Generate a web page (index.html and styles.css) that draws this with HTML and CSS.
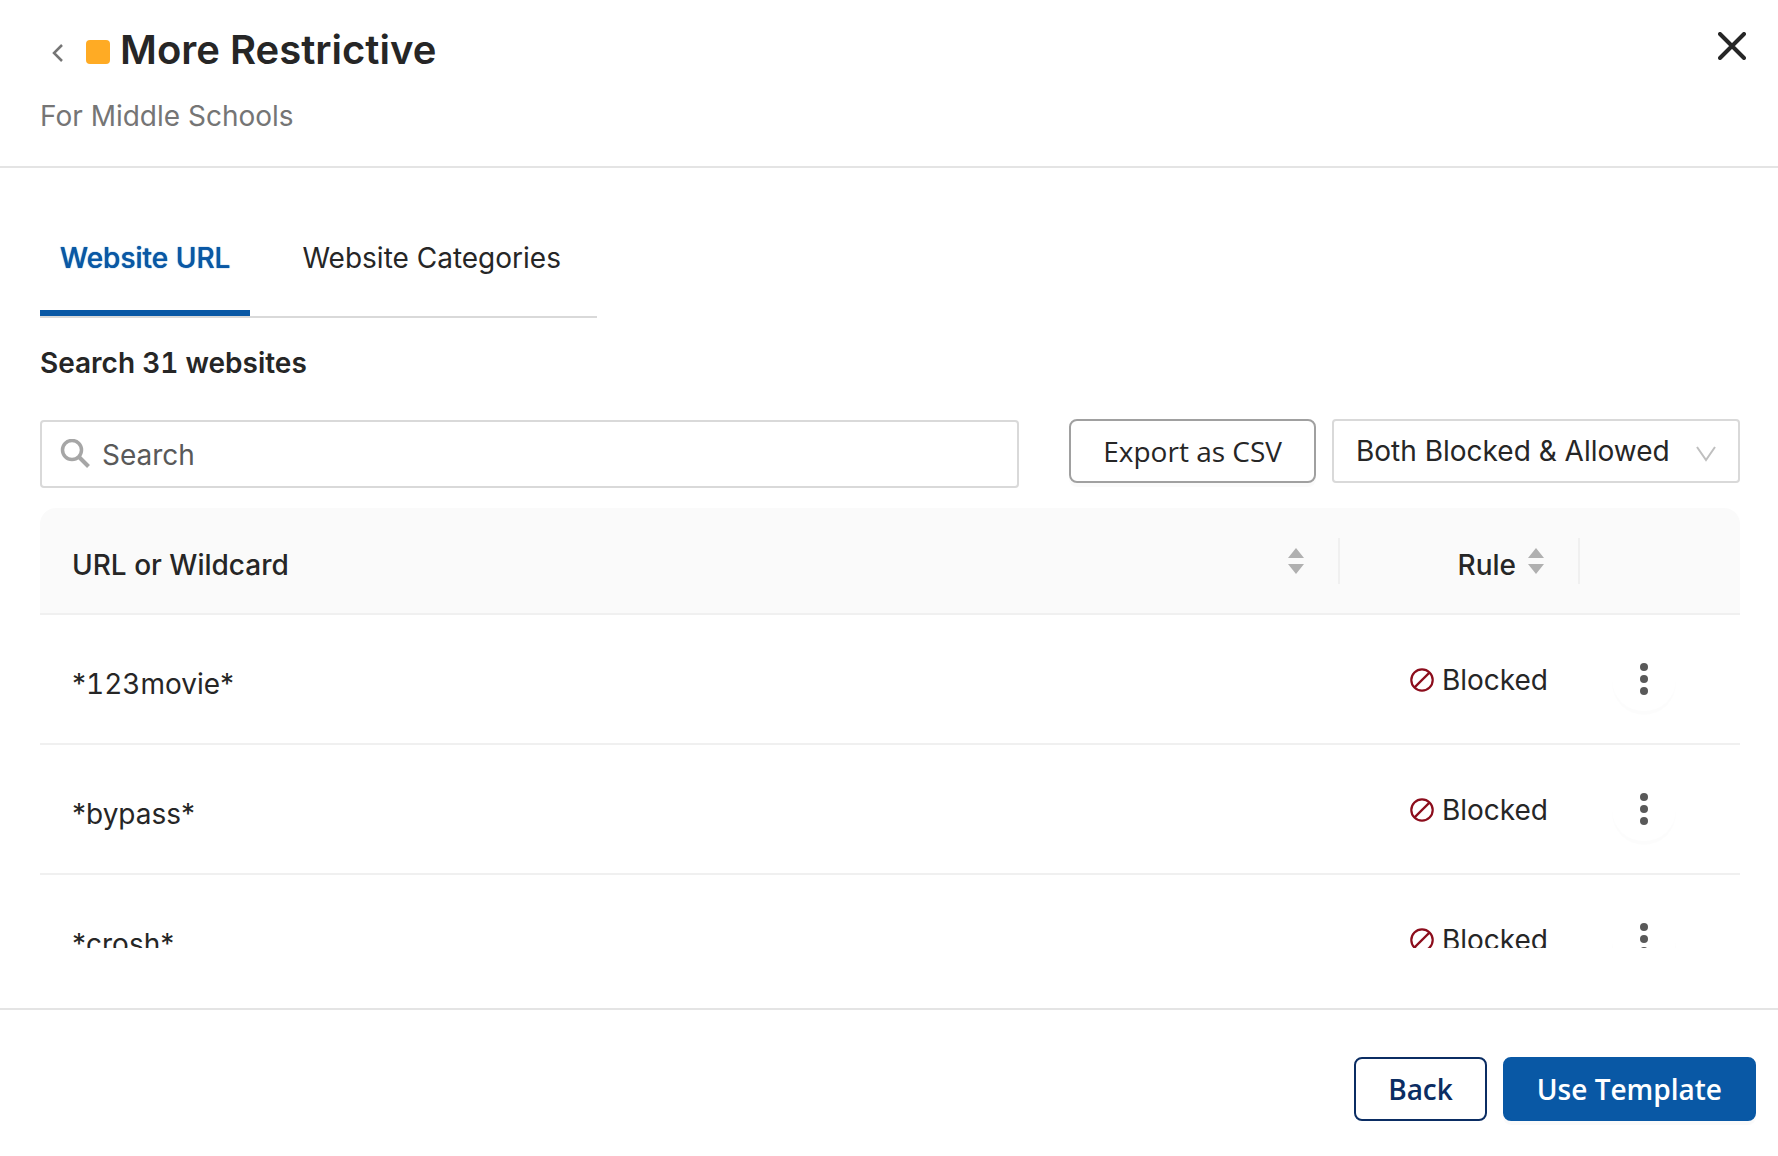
FILE: index.html
```
<!DOCTYPE html>
<html lang="en">
<head>
    <meta charset="UTF-8">
    <meta name="viewport" content="width=device-width, initial-scale=1.0">
    <title>More Restrictive</title>
    <link rel="stylesheet" href="styles.css">
</head>
<body>
    <!-- shared icons -->
    <svg class="sprite" aria-hidden="true">
        <symbol id="icon-blocked" viewBox="0 0 24 24">
            <circle cx="12" cy="12" r="10.7" fill="none" stroke="currentColor" stroke-width="2.2"/>
            <path d="M4.6 19.4L19.4 4.6" stroke="currentColor" stroke-width="2.2"/>
        </symbol>
        <symbol id="icon-dots" viewBox="0 0 8 32">
            <circle cx="4" cy="4" r="4"/>
            <circle cx="4" cy="16" r="4"/>
            <circle cx="4" cy="28" r="4"/>
        </symbol>
        <symbol id="icon-sort" viewBox="0 0 18 28">
            <path d="M1 11L9 1l8 10zM1 17h16L9 27z"/>
        </symbol>
    </svg>

    <header class="header">
        <div class="title-row">
            <button class="back-arrow" aria-label="Go back">
                <svg width="12" height="18" viewBox="0 0 12 18"><path d="M10 1L2 9l8 8" fill="none" stroke="currentColor" stroke-width="2.5"/></svg>
            </button>
            <span class="swatch"></span>
            <h1>More Restrictive</h1>
        </div>
        <p class="subtitle">For Middle Schools</p>
        <button class="close" aria-label="Close">
            <svg width="28" height="28" viewBox="0 0 28 28"><path d="M2 2l24 24M26 2L2 26" fill="none" stroke="currentColor" stroke-width="4" stroke-linecap="round"/></svg>
        </button>
    </header>

    <main class="content">
        <div class="tabs" role="tablist">
            <button class="tab active" role="tab" aria-selected="true">Website URL</button>
            <button class="tab" role="tab" aria-selected="false">Website Categories</button>
        </div>

        <label class="search-label" for="search">Search <span class="num">31</span> websites</label>

        <div class="toolbar">
            <div class="search-box">
                <svg width="30" height="30" viewBox="0 0 30 30"><circle cx="12" cy="11" r="9.5" fill="none" stroke="currentColor" stroke-width="3.5"/><path d="M18.500 17.500l10 10" stroke="currentColor" stroke-width="4"/></svg>
                <input type="text" id="search" placeholder="Search">
            </div>
            <button class="export">Export as CSV</button>
            <div class="select-box">
                <select aria-label="Rule filter">
                    <option>Both Blocked &amp; Allowed</option>
                    <option>Blocked</option>
                    <option>Allowed</option>
                </select>
                <svg width="20" height="16" viewBox="0 0 20 16"><path d="M1 1l9 13L19 1" fill="none" stroke="currentColor" stroke-width="2"/></svg>
            </div>
        </div>

        <div class="table-wrap">
            <table>
                <thead>
                    <tr>
                        <th class="col-url"><div class="head-cell"><span>URL or Wildcard</span><button class="sort" aria-label="Sort by URL"><svg width="18" height="28"><use href="#icon-sort"/></svg></button></div></th>
                        <th class="col-rule"><div class="head-cell"><span>Rule</span><button class="sort" aria-label="Sort by rule"><svg width="18" height="28"><use href="#icon-sort"/></svg></button></div></th>
                        <th class="col-menu"></th>
                    </tr>
                </thead>
                <tbody>
                    <tr>
                        <td class="url">*<span class="num">123</span>movie*</td>
                        <td><div class="rule"><svg width="24" height="24"><use href="#icon-blocked"/></svg>Blocked</div></td>
                        <td><button class="more" aria-label="More options"><svg width="8" height="32"><use href="#icon-dots"/></svg></button></td>
                    </tr>
                    <tr>
                        <td class="url">*bypass*</td>
                        <td><div class="rule"><svg width="24" height="24"><use href="#icon-blocked"/></svg>Blocked</div></td>
                        <td><button class="more" aria-label="More options"><svg width="8" height="32"><use href="#icon-dots"/></svg></button></td>
                    </tr>
                    <tr>
                        <td class="url">*crosh*</td>
                        <td><div class="rule"><svg width="24" height="24"><use href="#icon-blocked"/></svg>Blocked</div></td>
                        <td><button class="more" aria-label="More options"><svg width="8" height="32"><use href="#icon-dots"/></svg></button></td>
                    </tr>
                </tbody>
            </table>
        </div>
    </main>

    <footer class="footer">
        <button class="btn">Back</button>
        <button class="btn primary">Use Template</button>
    </footer>
</body>
</html>
```
FILE: styles.css
```
:root {
    --text-color: #262626;
    --muted-color: #757575;
    --border-color: #d9d9d9;
    --line-color: #f0f0f0;
    --accent-color: #0958a5;
    --accent-dark: #0b2d63;
}

* {
    box-sizing: border-box;
}

body {
    margin: 0;
    display: flex;
    flex-direction: column;
    height: 100vh;
    background-color: #fff;
    font-family: Inter, 'Liberation Sans', sans-serif;
    font-size: 28px;
    line-height: 44px;
    color: var(--text-color);
}

button,
input,
select {
    font: inherit;
    color: inherit;
    margin: 0;
}

button {
    padding: 0;
    border: none;
    background: none;
    cursor: pointer;
}

svg {
    display: block;
    flex-shrink: 0;
    fill: currentColor;
}

.sprite {
    position: absolute;
    width: 0;
    height: 0;
}

.num {
    font-variant-numeric: tabular-nums;
}

.header {
    position: relative;
    padding: 20px 40px 28px;
    border-bottom: 2px solid #e4e4e4;
}

.title-row {
    display: flex;
    align-items: center;
    height: 60px;
}

.back-arrow {
    padding: 6px 12px 0;
    color: var(--muted-color);
}

.swatch {
    width: 24px;
    height: 24px;
    margin: 4px 10px 0;
    border-radius: 4px;
    background-color: #ffab24;
}

h1 {
    margin: 0;
    font-size: 40px;
    font-weight: 600;
}

.subtitle {
    margin: 14px 0 0;
    color: var(--muted-color);
}

.close {
    position: absolute;
    top: 32px;
    right: 32px;
}

.content {
    flex: 1;
    min-height: 0;
    display: flex;
    flex-direction: column;
    padding: 52px 38px 60px 40px;
}

.tabs {
    display: flex;
    align-self: flex-start;
    gap: 32px;
    padding-right: 16px;
    border-bottom: 2px solid var(--border-color);
}

.tab {
    height: 96px;
    padding: 8px 20px 22px;
    border-bottom: 6px solid transparent;
}

.tab.active {
    font-weight: 500;
    color: var(--accent-color);
    border-bottom-color: var(--accent-color);
    text-shadow: 0 0 1px currentColor;
}

.search-label {
    margin-top: 23px;
    font-weight: 600;
}

.toolbar {
    display: flex;
    align-items: flex-start;
    margin-top: 34px;
}

.search-box {
    flex: 1;
    display: flex;
    align-items: center;
    gap: 12px;
    height: 68px;
    margin: 1px 50px 0 0;
    padding: 0 18px;
    border: 2px solid var(--border-color);
    border-radius: 4px;
    color: #a6a6a6;
}

.search-box input {
    flex: 1;
    min-width: 0;
    padding: 2px 0 0;
    border: none;
    outline: none;
    background: none;
    color: var(--text-color);
}

.search-box input::placeholder {
    color: #595959;
    opacity: 1;
}

.export {
    height: 64px;
    margin-right: 16px;
    padding: 0 32px;
    border: 2px solid #a0a0a0;
    border-radius: 8px;
    box-shadow: 0 4px 0 rgba(0, 0, 0, 0.02);
    font-family: 'Open Sans', sans-serif;
}

.select-box {
    position: relative;
    color: #bfbfbf;
}

.select-box select {
    height: 64px;
    padding: 0 68px 0 22px;
    border: 2px solid var(--border-color);
    border-radius: 4px;
    background-color: #fff;
    color: var(--text-color);
    appearance: none;
}

.select-box svg {
    position: absolute;
    top: 27px;
    right: 24px;
    pointer-events: none;
}

.table-wrap {
    flex: 1;
    min-height: 0;
    margin-top: 20px;
    overflow: auto;
    scrollbar-width: none;
}

table {
    width: 100%;
    table-layout: fixed;
    border-collapse: separate;
    border-spacing: 0;
}

th {
    height: 107px;
    padding: 0;
    background-color: #fafafa;
    border-bottom: 2px solid var(--line-color);
    font-weight: 500;
    text-align: left;
}

th:first-child {
    border-top-left-radius: 16px;
}

th:last-child {
    border-top-right-radius: 16px;
}

.col-rule {
    width: 240px;
}

.col-menu {
    width: 160px;
}

.head-cell {
    display: flex;
    align-items: center;
    justify-content: space-between;
    height: 46px;
    padding: 0 33px 0 32px;
    border-right: 2px solid var(--line-color);
}

.head-cell span {
    padding-top: 8px;
}

.col-rule .head-cell {
    justify-content: flex-end;
    gap: 11px;
}

.sort {
    color: #b0b0b0;
}

td {
    height: 130px;
    padding: 0 32px;
    border-bottom: 2px solid var(--line-color);
}

.url {
    padding-top: 10px;
}

.rule {
    display: flex;
    align-items: center;
    justify-content: flex-end;
    gap: 8px;
    padding-top: 2px;
}

.rule svg {
    color: #8c0d1c;
}

.more {
    display: flex;
    align-items: center;
    justify-content: center;
    width: 64px;
    height: 64px;
    border-radius: 50%;
    box-shadow: 0 4px 0 rgba(0, 0, 0, 0.01);
    color: #595959;
}

.footer {
    display: flex;
    justify-content: flex-end;
    gap: 16px;
    padding: 47px 22px 35px;
    border-top: 2px solid #e4e4e4;
}

.btn {
    height: 64px;
    padding: 0 32px;
    border: 2px solid var(--accent-dark);
    border-radius: 8px;
    font-family: 'Open Sans', sans-serif;
    font-weight: 600;
    color: var(--accent-dark);
}

.btn.primary {
    background-color: var(--accent-color);
    border-color: var(--accent-color);
    box-shadow: 0 4px 0 rgba(0, 0, 0, 0.02);
    color: #fff;
}
```
